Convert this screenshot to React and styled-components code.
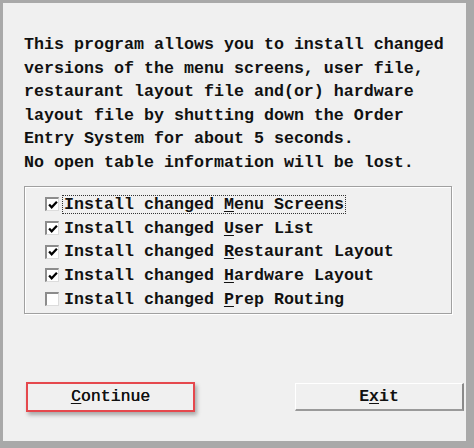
import styled, { createGlobalStyle } from "styled-components";

const GlobalStyle = createGlobalStyle`
  html, body {
    margin: 0;
    padding: 0;
    background: #a9a9a9;
  }
`;

const Frame = styled.div`
  width: 474px;
  height: 448px;
  box-sizing: border-box;
  padding: 3px 8px 7px 3px;
  background: #a9a9a9;
  display: flex;
`;

const Panel = styled.div`
  flex: 1;
  background: #f0f0f0;
  padding: 30px 0 0 21px;
  display: flex;
  flex-direction: column;
  font-family: "Liberation Mono", "DejaVu Sans Mono", monospace;
  font-weight: bold;
  font-size: 16.67px;
  color: #111;
`;

const Message = styled.div`
  line-height: 23.6px;
  white-space: pre;
`;

const GroupBox = styled.div`
  margin-top: 11px;
  width: 428px;
  height: 128px;
  box-sizing: border-box;
  border: 1px solid #a0a0a0;
  box-shadow: inset 1px 1px 0 #fff, 1px 1px 0 #fff;
  padding: 6px 0 0 20px;
  display: flex;
  flex-direction: column;
`;

const Row = styled.label`
  display: flex;
  align-items: center;
  height: 23.7px;
  gap: 4px;
`;

const Box = styled.span`
  width: 14px;
  height: 14px;
  box-sizing: border-box;
  background: #fff;
  border-top: 2px solid #8c8c8c;
  border-left: 2px solid #8c8c8c;
  border-right: 1px solid #dcdcdc;
  border-bottom: 1px solid #dcdcdc;
  display: flex;
  align-items: center;
  justify-content: center;
`;

const Label = styled.span`
  padding: 0 1px;
  line-height: 17px;
  outline: ${(p) => (p.$focused ? "1px dotted #333" : "none")};
`;

const Key = styled.span`
  text-decoration: underline;
  text-underline-offset: 2px;
`;

const ButtonRow = styled.div`
  margin-top: 68px;
  display: flex;
  align-items: center;
`;

const Button = styled.button`
  height: 28px;
  box-sizing: border-box;
  font: inherit;
  font-size: 16.5px;
  color: #111;
  background: #f0f0f0;
  padding: 0;
  cursor: pointer;
`;

const ContinueButton = styled(Button)`
  margin-left: 2px;
  width: 169px;
  height: 30px;
  border: 2px solid #e5484d;
  box-shadow: 2px 3px 4px rgba(0, 0, 0, 0.3);
  font-weight: normal;
  text-shadow: 0.4px 0 0 #111;
`;

const ExitButton = styled(Button)`
  margin-left: 100px;
  width: 169px;
  border-top: 1px solid #fff;
  border-left: 1px solid #fff;
  border-right: 2px solid #8a8a8a;
  border-bottom: 2px solid #9a9a9a;
`;

const CheckMark = () => (
  <svg width="10" height="10" viewBox="0 0 9 9">
    <polyline points="1,4 3.3,6.6 8,1.5" fill="none" stroke="#000" strokeWidth="2" />
  </svg>
);

const options = [
  { before: "Install changed ", key: "M", after: "enu Screens", checked: true, focused: true },
  { before: "Install changed ", key: "U", after: "ser List", checked: true },
  { before: "Install changed ", key: "R", after: "estaurant Layout", checked: true },
  { before: "Install changed ", key: "H", after: "ardware Layout", checked: true },
  { before: "Install changed ", key: "P", after: "rep Routing", checked: false },
];

const message = [
  "This program allows you to install changed",
  "versions of the menu screens, user file,",
  "restaurant layout file and(or) hardware",
  "layout file by shutting down the Order",
  "Entry System for about 5 seconds.",
  "No open table information will be lost.",
].join("\n");

export default function App() {
  return (
    <>
      <GlobalStyle />
      <Frame>
        <Panel>
          <Message>{message}</Message>
          <GroupBox>
            {options.map((o) => (
              <Row key={o.key}>
                <Box>{o.checked && <CheckMark />}</Box>
                <Label $focused={o.focused}>
                  {o.before}
                  <Key>{o.key}</Key>
                  {o.after}
                </Label>
              </Row>
            ))}
          </GroupBox>
          <ButtonRow>
            <ContinueButton>
              <Key>C</Key>ontinue
            </ContinueButton>
            <ExitButton>
              E<Key>x</Key>it
            </ExitButton>
          </ButtonRow>
        </Panel>
      </Frame>
    </>
  );
}
